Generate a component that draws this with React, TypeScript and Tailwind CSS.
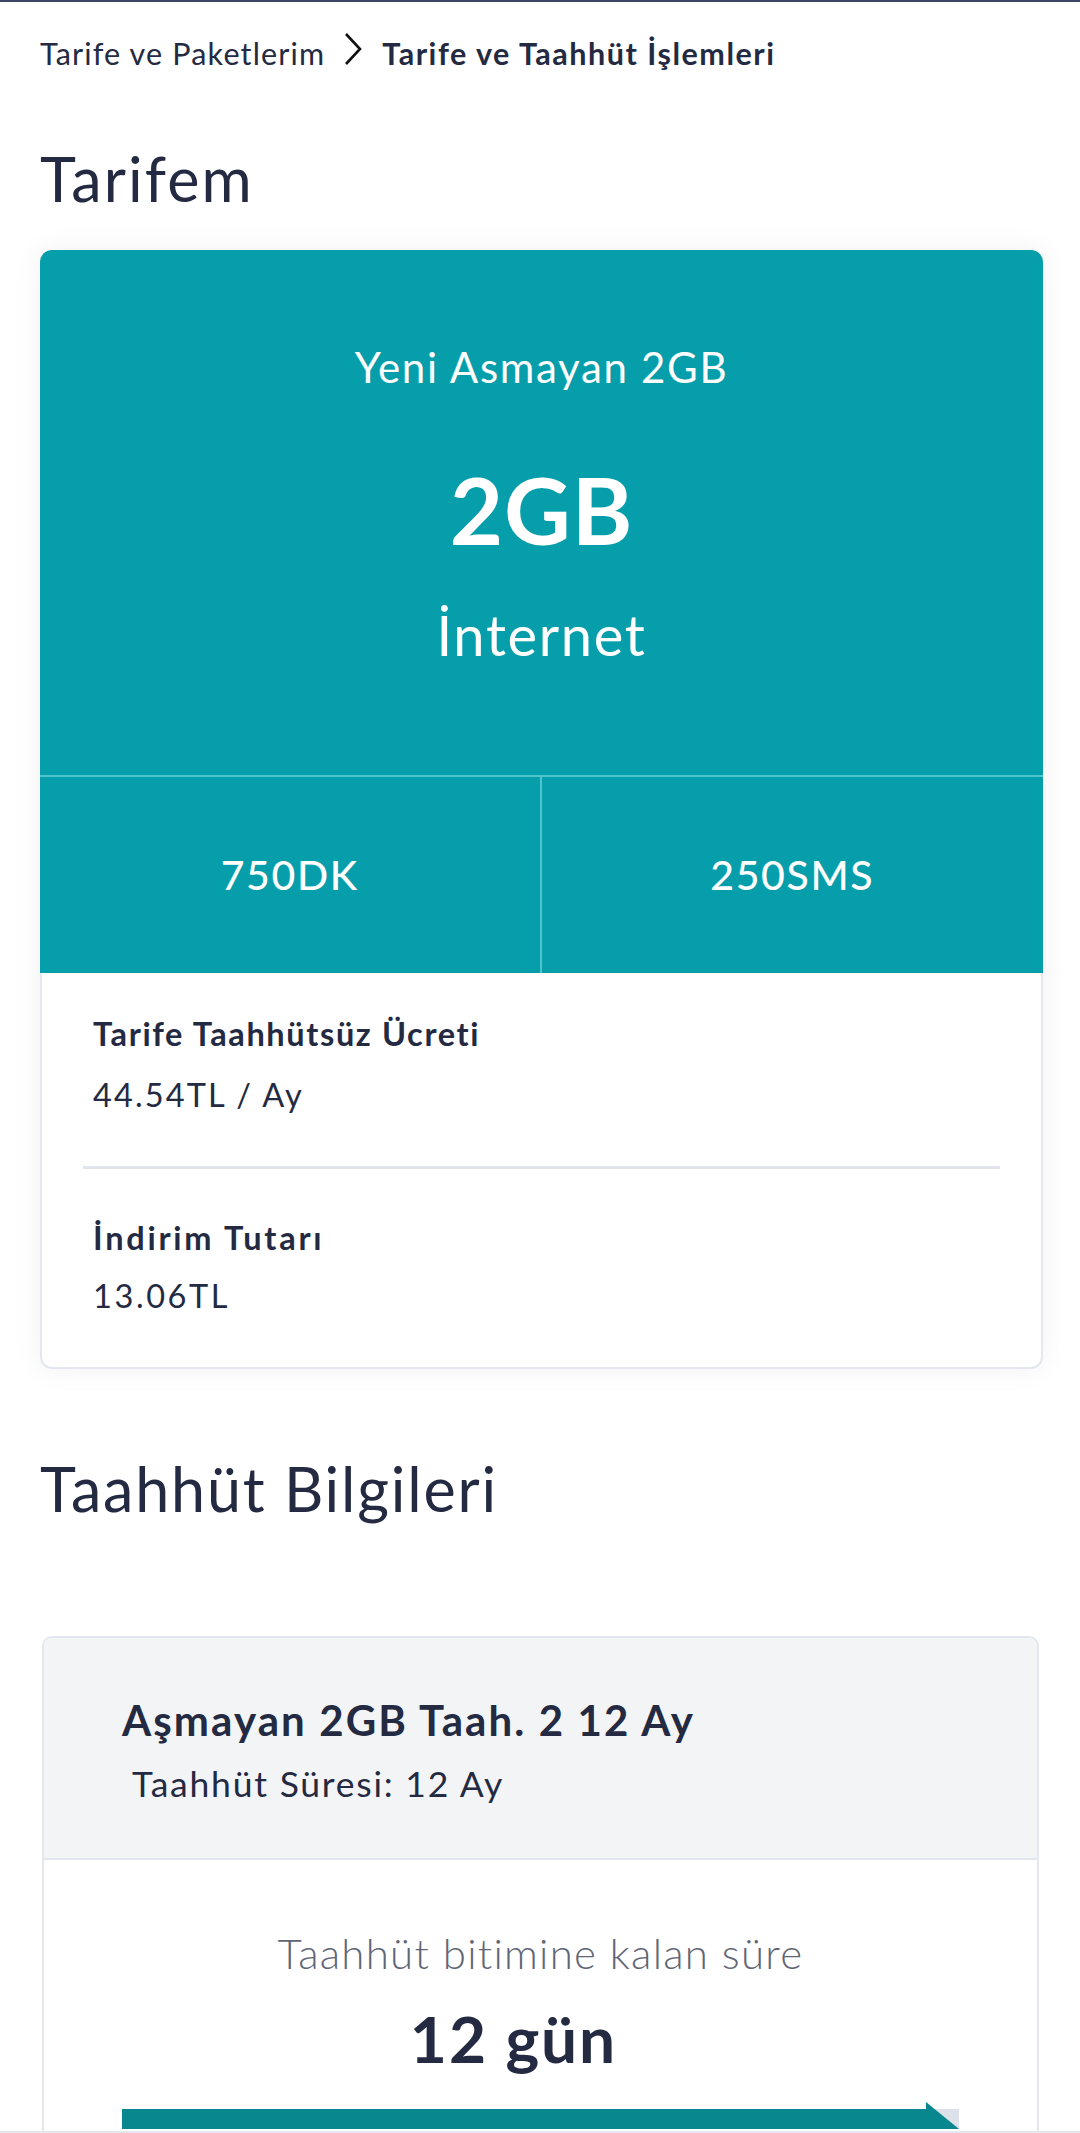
import React from "react"

const font = { fontFamily: "Lato, 'Noto Sans', sans-serif" }

function Breadcrumb() {
  return (
    <div className="flex items-center px-[40px] pt-[30px] h-[72px] text-[#232a42]">
      <span className="text-[30.5px] leading-none tracking-[0.038em]">Tarife ve Paketlerim</span>
      <svg width="22" height="34" viewBox="0 0 22 34" className="ml-[17px] mr-[18px] mb-[8px]">
        <polyline points="4,2 18,17 4,32" fill="none" stroke="#111" strokeWidth="2.6" />
      </svg>
      <span className="text-[30.5px] leading-none font-bold tracking-[0.05em]">Tarife ve Taahhüt İşlemleri</span>
    </div>
  )
}

function TariffCard() {
  return (
    <div className="mx-[40px] w-[1003px] shadow-[0_0_30px_rgba(30,40,70,0.06)] rounded-[12px]">
      {/* teal block */}
      <div className="bg-[#079eab] rounded-t-[12px] text-white">
        <div className="h-[525px] flex flex-col items-center pt-[92px]">
          <div className="h-[50px] leading-[50px] text-[42px] tracking-[0.04em]">Yeni Asmayan 2GB</div>
          <div className="mt-[68px] h-[100px] leading-[100px] text-[92px] font-bold tracking-[0.01em]">2GB</div>
          <div className="mt-[40px] h-[70px] leading-[70px] text-[56px] tracking-[0.03em]">İnternet</div>
        </div>
        <div className="grid grid-cols-2 h-[198px] border-t-2 border-[#4fc4cd]">
          <div className="flex items-center justify-center border-r-2 border-[#4fc4cd] text-[41px] font-medium tracking-[0.04em]">
            750DK
          </div>
          <div className="flex items-center justify-center text-[41px] font-medium tracking-[0.04em]">250SMS</div>
        </div>
      </div>
      {/* price details */}
      <div className="bg-white border-2 border-t-0 border-[#e4e7ee] rounded-b-[12px] h-[396px] text-[#232a42]">
        <div className="px-[51px] pt-[40px] h-[193px]">
          <div className="text-[32.5px] font-bold leading-[42px] tracking-[0.05em]">Tarife Taahhütsüz Ücreti</div>
          <div className="text-[32.5px] leading-[42px] mt-[19px] tracking-[0.065em]">44.54TL / Ay</div>
        </div>
        <div className="mx-[41px] h-[3px] bg-[#e2e5ed]" />
        <div className="px-[51px] pt-[48px]">
          <div className="text-[32.5px] font-bold leading-[42px] tracking-[0.085em]">İndirim Tutarı</div>
          <div className="text-[32.5px] leading-[42px] mt-[16px] tracking-[0.08em]">13.06TL</div>
        </div>
      </div>
    </div>
  )
}

function CommitmentCard() {
  return (
    <div className="mx-[42px] w-[997px] border-2 border-[#e4e7ee] rounded-t-[10px] overflow-hidden">
      <div className="bg-[#f3f4f6] h-[222px] border-b-2 border-[#e4e7ee] pl-[78px] pt-[57px] text-[#232a42]">
        <div className="text-[42px] font-bold leading-[50px] tracking-[0.05em]">Aşmayan 2GB Taah. 2 12 Ay</div>
        <div className="text-[35.5px] leading-[44px] mt-[17px] pl-[10px] tracking-[0.05em]">Taahhüt Süresi: 12 Ay</div>
      </div>
      <div className="bg-white flex flex-col items-center pt-[68px] h-[300px]">
        <div className="text-[42px] font-light leading-[50px] text-[#5f6675] tracking-[0.03em]">
          Taahhüt bitimine kalan süre
        </div>
        <div className="text-[64px] font-bold leading-[70px] mt-[26px] pr-[54px] text-[#232a42] tracking-[0.03em]">
          12 gün
        </div>
        <div className="w-[837px] mt-[35px] flex items-end self-start ml-[78px]">
          <div className="flex-1 h-[20px] bg-[#08878f]" />
          <div className="relative w-[33px] h-[20px] bg-[#dde1ea]">
            <svg width="33" height="27" viewBox="0 0 33 27" className="absolute left-0 bottom-0">
              <polygon points="0,0 33,27 0,27" fill="#08878f" />
            </svg>
          </div>
        </div>
      </div>
    </div>
  )
}

export default function App() {
  return (
    <div style={font} className="w-[1080px] h-[2133px] overflow-hidden bg-white border-t-2 border-[#3b4664] relative">
      <Breadcrumb />
      <h1 className="px-[40px] mt-[70px] text-[61px] leading-[70px] text-[#232a42] tracking-[0.035em]">Tarifem</h1>
      <div className="mt-[36px]">
        <TariffCard />
      </div>
      <h2 className="px-[40px] mt-[85px] text-[61px] leading-[70px] text-[#232a42] tracking-[0.03em]">
        Taahhüt Bilgileri
      </h2>
      <div className="mt-[112px]">
        <CommitmentCard />
      </div>
      <div className="absolute left-0 right-0 bottom-0 h-[2px] bg-[#e4e7ee]" />
    </div>
  )
}
